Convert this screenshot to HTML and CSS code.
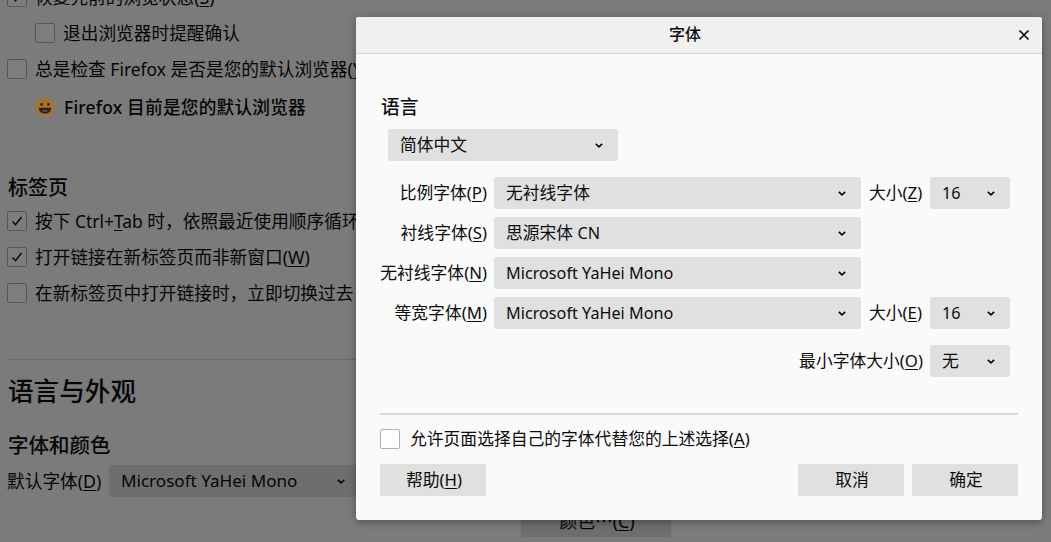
FILE: index.html

```html
<!DOCTYPE html>
<html lang="zh-CN">
<head>
  <meta charset="UTF-8" />
  <title>字体</title>
  <link rel="stylesheet" href="styles.css">
</head>
<body>
  <svg class="sprite" width="0" height="0">
    <symbol id="chev" viewBox="0 0 10 6"><path d="M1 1l4 3.6L9 1" fill="none" stroke="currentColor" stroke-width="2.2"/></symbol>
    <symbol id="tick" viewBox="0 0 20 20"><path d="M5 10.5l3.4 3.6L15 5.5" fill="none" stroke="currentColor" stroke-width="1.6"/></symbol>
  </svg>

  <div class="page">
    <div class="row"><span class="check on"><svg><use href="#tick"/></svg></span><span class="txt">恢复先前的浏览状态(<u>S</u>)</span></div>
    <div class="row sub"><span class="check"></span><span class="txt">退出浏览器时提醒确认</span></div>
    <div class="row"><span class="check"></span><span class="txt">总是检查 <span class="lat">Firefox</span> 是否是您的默认浏览器(<u>Y</u>)</span></div>
    <div class="row sub default-note">
      <svg class="emoji" viewBox="0 0 20 20">
        <circle cx="10" cy="10" r="9.5" fill="#a8742c"/>
        <circle cx="6.6" cy="7.4" r="1.4" fill="#2e2212"/>
        <circle cx="13.4" cy="7.4" r="1.4" fill="#2e2212"/>
        <path d="M3.8 10.8h12.4c0 3.6-2.8 5.800-6.200 5.800s-6.200-2.200-6.200-5.800z" fill="#2a2018"/>
        <path d="M6.500 13h7c-1 1.400-2.200 2-3.500 2s-2.500-.6-3.500-2z" fill="#4d5060"/>
      </svg>
      <span class="txt note-text"><span class="lat">Firefox</span> 目前是您的默认浏览器</span>
    </div>

    <h2 class="tabs-title">标签页</h2>
    <div class="row"><span class="check on"><svg><use href="#tick"/></svg></span><span class="txt">按下 <span class="lat">Ctrl+<u>T</u>ab</span> 时&#xFF0C;依照最近使用顺序循环切换标签页</span></div>
    <div class="row"><span class="check on"><svg><use href="#tick"/></svg></span><span class="txt">打开链接在新标签页而非新窗口(<u>W</u>)</span></div>
    <div class="row"><span class="check"></span><span class="txt">在新标签页中打开链接时&#xFF0C;立即切换过去</span></div>

    <hr class="page-rule">
    <h1>语言与外观</h1>
    <h2 class="fonts-title">字体和颜色</h2>
    <div class="font-row">
      <span class="font-label">默认字体(<u>D</u>)</span>
      <div class="select page-select"><span class="lat">Microsoft YaHei Mono</span><svg class="chev"><use href="#chev"/></svg></div>
    </div>
    <button class="btn colors-btn">颜色<span class="dots">…</span>(<u>C</u>)</button>
  </div>

  <div class="overlay"></div>

  <div class="dialog">
    <div class="dialog-head">
      <span>字体</span>
      <svg class="close" viewBox="0 0 12 12"><path d="M1.500 1.500l9 9M10.500 1.500l-9 9" fill="none" stroke="currentColor" stroke-width="1.700"/></svg>
    </div>
    <div class="dialog-body">
      <h3>语言</h3>
      <div class="select lang-select"><span>简体中文</span><svg class="chev"><use href="#chev"/></svg></div>

      <div class="font-grid">
        <label>比例字体(<u>P</u>)</label>
        <div class="select"><span>无衬线字体</span><svg class="chev"><use href="#chev"/></svg></div>
        <label class="size-label">大小(<u>Z</u>)</label>
        <div class="select size"><span class="lat">16</span><svg class="chev"><use href="#chev"/></svg></div>

        <label>衬线字体(<u>S</u>)</label>
        <div class="select"><span>思源宋体 <span class="lat">CN</span></span><svg class="chev"><use href="#chev"/></svg></div>
        <i></i><i></i>

        <label>无衬线字体(<u>N</u>)</label>
        <div class="select"><span class="lat">Microsoft YaHei Mono</span><svg class="chev"><use href="#chev"/></svg></div>
        <i></i><i></i>

        <label>等宽字体(<u>M</u>)</label>
        <div class="select"><span class="lat">Microsoft YaHei Mono</span><svg class="chev"><use href="#chev"/></svg></div>
        <label class="size-label">大小(<u>E</u>)</label>
        <div class="select size"><span class="lat">16</span><svg class="chev"><use href="#chev"/></svg></div>
      </div>

      <div class="min-size">
        <label>最小字体大小(<u>O</u>)</label>
        <div class="select size"><span>无</span><svg class="chev"><use href="#chev"/></svg></div>
      </div>

      <div class="dialog-rule"></div>

      <div class="allow"><span class="check"></span><span class="txt">允许页面选择自己的字体代替您的上述选择(<u>A</u>)</span></div>

      <div class="dialog-btns">
        <button class="btn">帮助(<u>H</u>)</button>
        <div class="btn-right">
          <button class="btn">取消</button>
          <button class="btn">确定</button>
        </div>
      </div>
    </div>
  </div>
</body>
</html>
```

FILE: styles.css

```css
html, body {
  margin: 0;
  height: 100%;
  overflow: hidden;
}

body {
  font-family: "Noto Sans", "Noto Sans CJK SC", sans-serif;
  font-size: 16px;
  color: #0c0c0d;
  background: #fafafa;
  position: relative;
}

.sprite {
  position: absolute;
}

u {
  text-underline-offset: 2px;
}

/* latin glyphs sit a little smaller than the CJK ones in the original */
.lat {
  font-size: 0.965em;
}

.page {
  margin-top: -13px;
  padding-left: 7px;
  width: 900px;
  font-size: 17.7px;
}

.page .txt .lat {
  font-size: 0.985em;
}

/* rows run on under the dialog, stop them just past its edge */
.row {
  display: flex;
  align-items: center;
  gap: 8px;
  width: 352px;
  box-sizing: border-box;
  height: 20px;
  margin-bottom: 16px;
  white-space: nowrap;
  overflow: hidden;
}

.txt {
  padding-bottom: 2px;
}

.sub {
  padding-left: 28px;
}

.check {
  width: 18px;
  height: 18px;
  flex: none;
  border: 1px solid #b1b1b1;
  border-radius: 2px;
  background: #fff;
  display: block;
}

.check svg {
  display: block;
  width: 18px;
  height: 18px;
  color: #0c0c0d;
}

.default-note {
  margin-top: 18px;
  gap: 9px;
  overflow: visible;
}

/* already in its dimmed colours, sits above the overlay */
.emoji {
  width: 20px;
  height: 20px;
  flex: none;
  position: relative;
  z-index: 2;
}

.note-text {
  font-weight: 500;
  letter-spacing: 0.2px;
}

h1, h2, h3 {
  margin: 0;
  font-weight: 500;
}

.tabs-title {
  font-size: 20px;
  line-height: 28px;
  margin: 57px 0 9px 1px;
}

.page-rule {
  border: 0;
  height: 1px;
  background: #d7d7d7;
  margin: 56px 0 0;
}

.page h1 {
  font-size: 25.6px;
  line-height: 36px;
  margin: 14px 0 0 1px;
}

.fonts-title {
  font-size: 20.5px;
  line-height: 28px;
  margin: 21px 0 6px 1px;
}

.font-row {
  display: flex;
  align-items: center;
  gap: 8px;
}

.font-label {
  width: 94px;
  white-space: nowrap;
  padding-bottom: 2px;
}

.select {
  height: 32px;
  background: #e0e0e0;
  border-radius: 2px;
  display: flex;
  align-items: center;
  justify-content: space-between;
  padding: 0 15px 0 12px;
  box-sizing: border-box;
  white-space: nowrap;
}

.select > span:not(.lat),
.page-select > span {
  padding-bottom: 2px;
}

.chev {
  width: 8px;
  height: 5px;
  color: #0c0c0d;
  flex: none;
}

.page-select {
  width: 251px;
}

.btn {
  font: inherit;
  color: inherit;
  height: 32px;
  width: 106px;
  border: 0;
  padding: 0 0 2px 2px;
  background: #e0e0e0;
  border-radius: 2px;
}

.colors-btn {
  display: block;
  width: 150px;
  margin: 8px 0 0 514px;
}

.dots {
  font-family: "Noto Sans CJK SC", sans-serif;
}

.overlay {
  position: absolute;
  inset: 0;
  z-index: 1;
  background: rgba(0, 0, 0, 0.51);
}

.dialog {
  position: absolute;
  left: 356px;
  top: 17px;
  z-index: 3;
  width: 686px;
  height: 503px;
  background: #fafafa;
  border-radius: 3px;
  box-shadow: 0 2px 8px rgba(0, 0, 0, 0.35);
  overflow: hidden;
}

.dialog-head {
  height: 36px;
  background: #f0f0f0;
  border-bottom: 1px solid #d7d7d7;
  display: flex;
  align-items: center;
  justify-content: center;
  position: relative;
  padding-right: 28px;
  font-size: 16px;
  font-weight: 500;
}

.dialog-head span {
  padding-bottom: 5px;
}

.close {
  position: absolute;
  right: 12px;
  top: 12px;
  width: 12px;
  height: 12px;
}

.dialog-body {
  padding: 39px 24px 0;
  font-size: 16.8px;
}

h3 {
  font-size: 18.8px;
  line-height: 28px;
  margin-left: 1px;
}

.lang-select {
  width: 230px;
  margin: 8px 0 16px 8px;
}

.font-grid {
  display: grid;
  grid-template-columns: 107px 367px 55px 80px;
  column-gap: 7px;
  row-gap: 8px;
  align-items: center;
}

.font-grid label,
.min-size label {
  text-align: right;
  white-space: nowrap;
  padding-bottom: 2px;
}

.font-grid .size-label {
  text-align: left;
  padding-left: 1px;
}

.size {
  width: 80px;
}

.min-size {
  display: flex;
  align-items: center;
  justify-content: flex-end;
  gap: 7px;
  margin: 16px 8px 0 0;
}

.dialog-rule {
  height: 2px;
  background: #d7d7d7;
  margin-top: 36px;
}

.allow {
  display: flex;
  align-items: center;
  gap: 10px;
  height: 20px;
  margin-top: 14px;
}

.dialog-btns {
  display: flex;
  justify-content: space-between;
  margin-top: 15px;
}

.btn-right {
  display: flex;
  gap: 8px;
}
```
